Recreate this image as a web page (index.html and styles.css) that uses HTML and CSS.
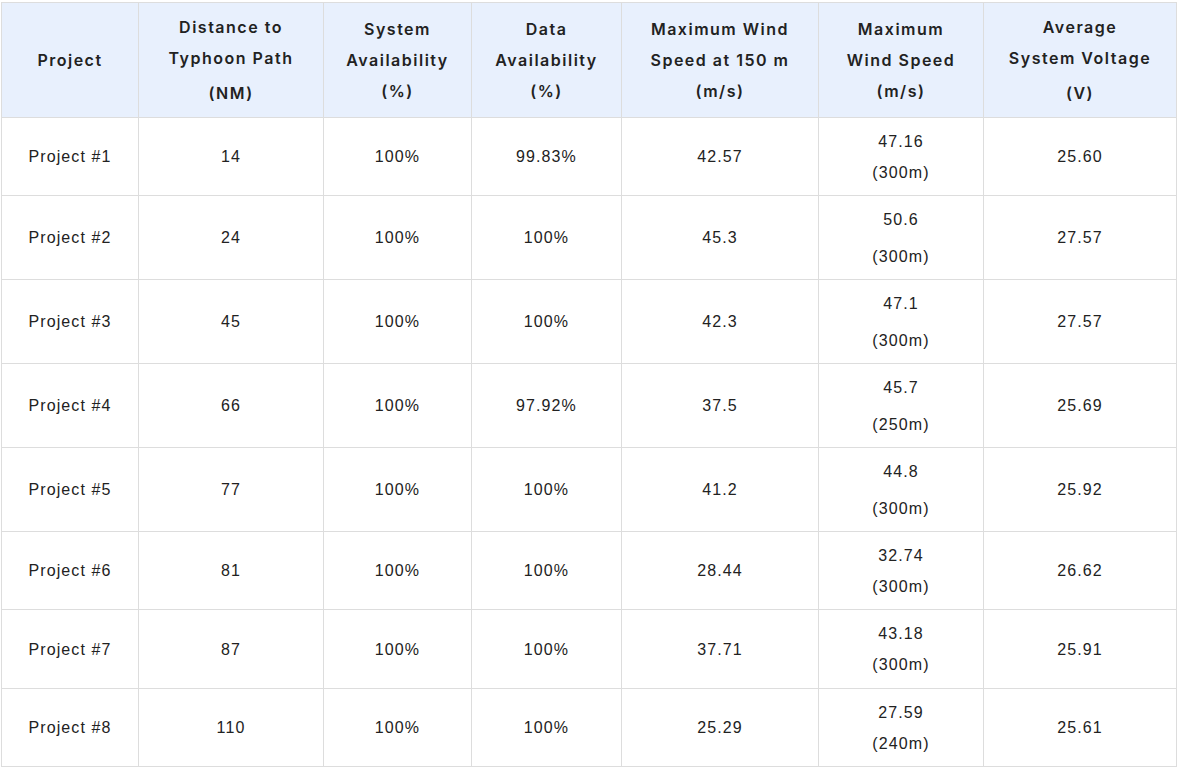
FILE: index.html
```html
<!DOCTYPE html>
<html lang="en">
<head>
<meta charset="utf-8">
<title>Typhoon Projects</title>
<link rel="stylesheet" href="styles.css">
</head>
<body>
<table class="data">
  <colgroup>
    <col class="c1"><col class="c2"><col class="c3"><col class="c4"><col class="c5"><col class="c6"><col class="c7">
  </colgroup>
  <thead>
    <tr class="head">
      <th><div class="t">Project</div></th>
      <th><div class="t">Distance to<br>Typhoon Path</div><div class="u">(NM)</div></th>
      <th><div class="t">System<br>Availability<br>(%)</div></th>
      <th><div class="t">Data<br>Availability<br>(%)</div></th>
      <th><div class="t">Maximum Wind<br>Speed at 150 m<br>(m/s)</div></th>
      <th><div class="t">Maximum<br>Wind Speed<br>(m/s)</div></th>
      <th><div class="t">Average<br>System Voltage</div><div class="u">(V)</div></th>
    </tr>
  </thead>
  <tbody>
    <tr class="r78"><td>Project #1</td><td>14</td><td>100%</td><td>99.83%</td><td>42.57</td><td>47.16<br>(300m)</td><td>25.60</td></tr>
    <tr class="r84"><td>Project #2</td><td>24</td><td>100%</td><td>100%</td><td>45.3</td><td><div>50.6</div><div class="p">(300m)</div></td><td>27.57</td></tr>
    <tr class="r84"><td>Project #3</td><td>45</td><td>100%</td><td>100%</td><td>42.3</td><td><div>47.1</div><div class="p">(300m)</div></td><td>27.57</td></tr>
    <tr class="r84"><td>Project #4</td><td>66</td><td>100%</td><td>97.92%</td><td>37.5</td><td><div>45.7</div><div class="p">(250m)</div></td><td>25.69</td></tr>
    <tr class="r84"><td>Project #5</td><td>77</td><td>100%</td><td>100%</td><td>41.2</td><td><div>44.8</div><div class="p">(300m)</div></td><td>25.92</td></tr>
    <tr class="r78"><td>Project #6</td><td>81</td><td>100%</td><td>100%</td><td>28.44</td><td>32.74<br>(300m)</td><td>26.62</td></tr>
    <tr class="r79"><td>Project #7</td><td>87</td><td>100%</td><td>100%</td><td>37.71</td><td>43.18<br>(300m)</td><td>25.91</td></tr>
    <tr class="r78"><td>Project #8</td><td>110</td><td>100%</td><td>100%</td><td>25.29</td><td>27.59<br>(240m)</td><td>25.61</td></tr>
  </tbody>
</table>
</body>
</html>
```
FILE: styles.css
```css
html, body {
  margin: 0;
  padding: 0;
  background: #ffffff;
}
body {
  padding: 2px 0 0 1px;
  font-family: "Liberation Sans", Arial, sans-serif;
  color: #222222;
}
.data {
  border-collapse: collapse;
  table-layout: fixed;
  width: 1176px;
  font-size: 16px;
  letter-spacing: 1.1px;
}
.c1 { width: 137px; }
.c2 { width: 185px; }
.c3 { width: 148px; }
.c4 { width: 150px; }
.c5 { width: 197px; }
.c6 { width: 165px; }
.c7 { width: 193px; }
.data th, .data td {
  border: 1px solid #dddddd;
  text-align: center;
  vertical-align: middle;
  padding: 0 6px;
  line-height: 31px;
}
.data th {
  background: #e8f0fd;
  font-family: Inter, "Liberation Sans", Arial, sans-serif;
  font-weight: 600;
  letter-spacing: 1.5px;
}
.head { height: 115px; }
.u { margin-top: 4px; }
.r78 { height: 78px; }
.r79 { height: 79px; }
.r84 { height: 84px; }
.p { margin-top: 6px; }
```
